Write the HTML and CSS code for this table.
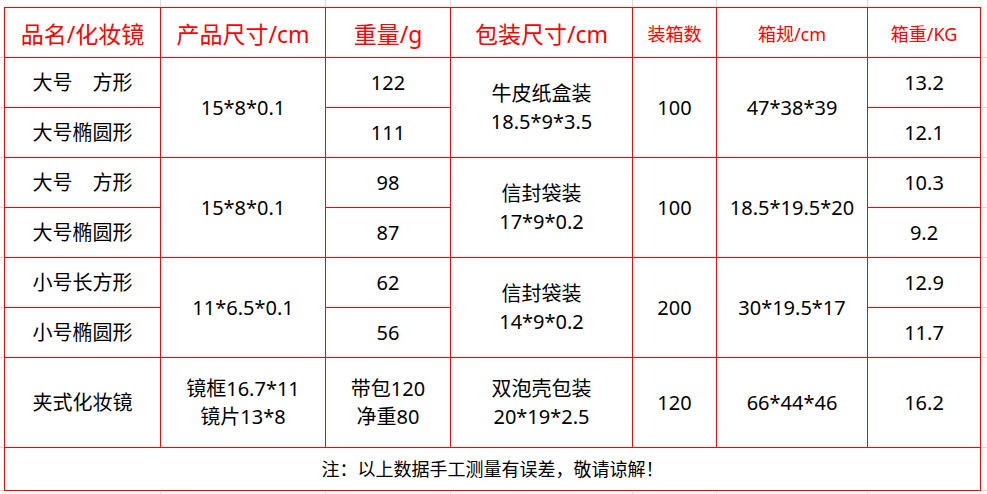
FILE: index.html
```html
<!DOCTYPE html>
<html lang="zh">
<head>
<meta charset="utf-8">
<link rel="stylesheet" href="styles.css">
</head>
<body>
<table class="spec">
  <colgroup>
    <col class="c1"><col class="c2"><col class="c3"><col class="c4"><col class="c5"><col class="c6"><col class="c7">
  </colgroup>
  <thead>
    <tr class="head">
      <th class="big">品名/化妆镜</th>
      <th class="big">产品尺寸/cm</th>
      <th class="big">重量/g</th>
      <th class="big">包装尺寸/cm</th>
      <th class="small">装箱数</th>
      <th class="small">箱规/cm</th>
      <th class="small">箱重/KG</th>
    </tr>
  </thead>
  <tbody>
    <tr>
      <td>大号　方形</td>
      <td rowspan="2">15*8*0.1</td>
      <td>122</td>
      <td rowspan="2">牛皮纸盒装<br>18.5*9*3.5</td>
      <td rowspan="2">100</td>
      <td rowspan="2">47*38*39</td>
      <td>13.2</td>
    </tr>
    <tr>
      <td>大号椭圆形</td>
      <td>111</td>
      <td>12.1</td>
    </tr>
    <tr>
      <td>大号　方形</td>
      <td rowspan="2">15*8*0.1</td>
      <td>98</td>
      <td rowspan="2">信封袋装<br>17*9*0.2</td>
      <td rowspan="2">100</td>
      <td rowspan="2">18.5*19.5*20</td>
      <td>10.3</td>
    </tr>
    <tr>
      <td>大号椭圆形</td>
      <td>87</td>
      <td>9.2</td>
    </tr>
    <tr>
      <td>小号长方形</td>
      <td rowspan="2">11*6.5*0.1</td>
      <td>62</td>
      <td rowspan="2">信封袋装<br>14*9*0.2</td>
      <td rowspan="2">200</td>
      <td rowspan="2">30*19.5*17</td>
      <td>12.9</td>
    </tr>
    <tr>
      <td>小号椭圆形</td>
      <td>56</td>
      <td>11.7</td>
    </tr>
    <tr class="tall">
      <td>夹式化妆镜</td>
      <td>镜框16.7*11<br>镜片13*8</td>
      <td>带包120<br>净重80</td>
      <td>双泡壳包装<br>20*19*2.5</td>
      <td>120</td>
      <td>66*44*46</td>
      <td>16.2</td>
    </tr>
    <tr class="note">
      <td colspan="7">注：以上数据手工测量有误差，敬请谅解！</td>
    </tr>
  </tbody>
</table>
</body>
</html>
```

FILE: styles.css
```css
html, body {
  margin: 0;
  padding: 0;
}
body {
  width: 987px;
  height: 494px;
  overflow: hidden;
  padding: 7px 0 0 4px;
  box-sizing: border-box;
  font-family: "Noto Sans", "Noto Sans CJK SC", sans-serif;
  color: #000;
  background-color: #fff;
  background-image:
    linear-gradient(#dadada, #dadada),
    linear-gradient(#dadada, #dadada),
    linear-gradient(#dadada, #dadada),
    linear-gradient(#dadada, #dadada),
    linear-gradient(#dadada, #dadada),
    linear-gradient(#dadada, #dadada),
    linear-gradient(#dadada, #dadada),
    linear-gradient(#dadada, #dadada),
    linear-gradient(#dadada, #dadada),
    linear-gradient(#dadada, #dadada),
    linear-gradient(#dadada, #dadada),
    linear-gradient(#dadada, #dadada),
    linear-gradient(#dadada, #dadada),
    linear-gradient(#dadada, #dadada),
    linear-gradient(#dadada, #dadada);
  background-repeat: no-repeat;
  background-size:
    1px 100%, 1px 100%, 1px 100%, 1px 100%, 1px 100%, 1px 100%,
    100% 1px, 100% 1px, 100% 1px, 100% 1px, 100% 1px, 100% 1px, 100% 1px, 100% 1px, 100% 1px;
  background-position:
    160px 0, 325px 0, 450px 0, 632px 0, 716px 0, 867px 0,
    0 57px, 0 107px, 0 157px, 0 207px, 0 257px, 0 307px, 0 357px, 0 447px, 0 490px;
}
.spec {
  border-collapse: collapse;
  table-layout: fixed;
  width: 976px;
  background: #fff;
}
.c1 { width: 156px; }
.c2 { width: 165px; }
.c3 { width: 125px; }
.c4 { width: 182px; }
.c5 { width: 84px; }
.c6 { width: 151px; }
.c7 { width: 113px; }
.spec th,
.spec td {
  border: 1px solid #ff0000;
  padding: 0;
  text-align: center;
  vertical-align: middle;
  font-weight: normal;
  white-space: nowrap;
}
.spec tr {
  height: 50px;
}
.spec td {
  font-size: 20px;
  line-height: 28px;
}
.spec th {
  color: #ff0000;
}
.spec th.big {
  font-size: 23px;
}
.spec th.small {
  font-size: 18px;
}
.spec tr.tall {
  height: 90px;
}
.spec tr.note {
  height: 43px;
}
.spec tr.note td {
  font-size: 18px;
}
```
